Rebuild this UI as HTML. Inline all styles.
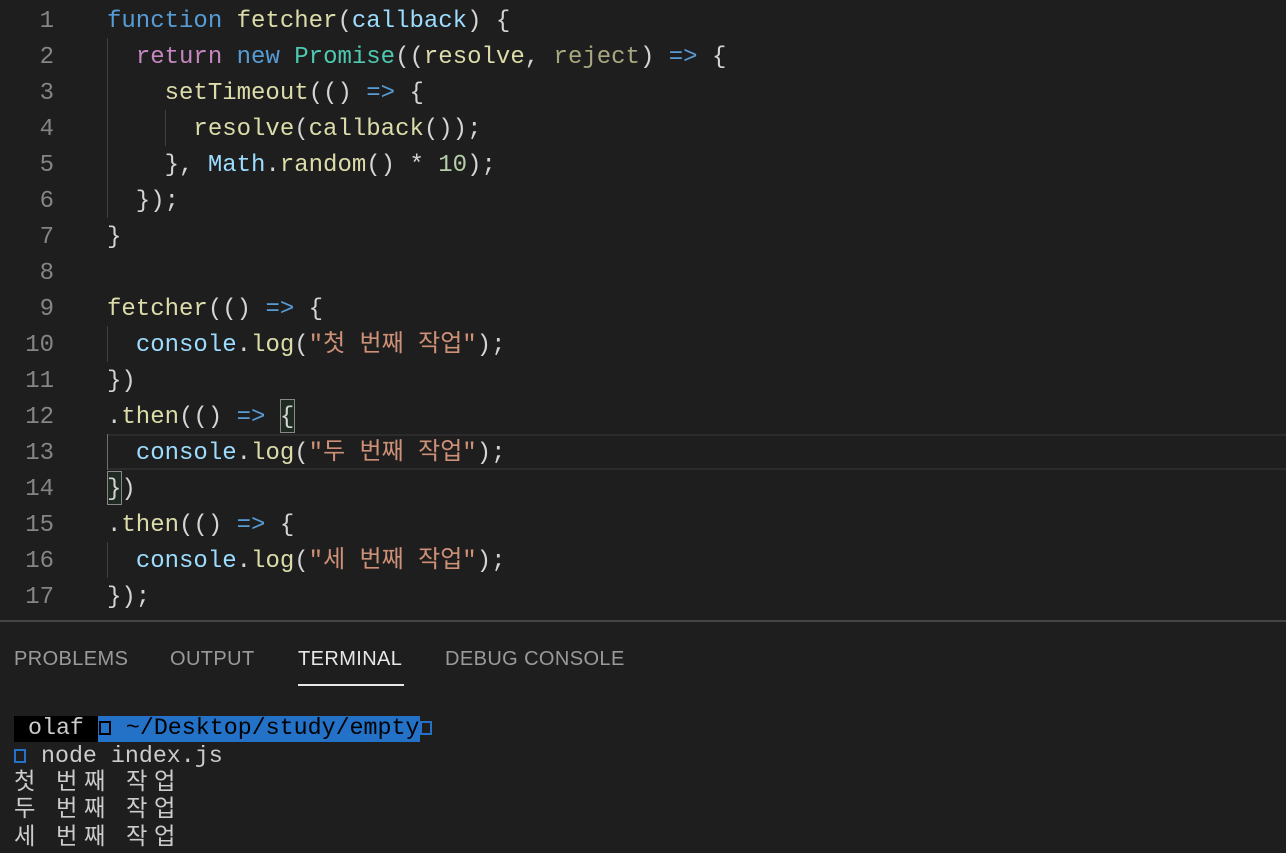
<!DOCTYPE html>
<html><head><meta charset="utf-8"><style>
*{margin:0;padding:0;box-sizing:border-box}
body{width:1286px;height:852px;background:#1e1e1e;overflow:hidden;position:relative;font-family:"Liberation Mono","Noto Sans CJK KR",monospace}
.ln{position:absolute;left:0;width:54px;text-align:right;color:#858585;font-size:24px;line-height:36px;height:36px;margin-top:2px}
.cl{position:absolute;left:107px;font-size:24px;line-height:36px;height:36px;white-space:pre;color:#d4d4d4;margin-top:2px}
.k{color:#569cd6}.p{color:#c586c0}.f{color:#dcdcaa}.v{color:#9cdcfe}.c{color:#4ec9b0}.s{color:#ce9178}.n{color:#b5cea8}.d{color:#a8a880}
.g{position:absolute;width:1px;background:#404040}
.tab{position:absolute;top:648px;font-family:"Liberation Sans",sans-serif;font-size:20px;color:#9a9a9a;letter-spacing:0.4px}
.t{position:absolute;left:14px;font-size:23.3px;line-height:27.5px;white-space:pre;color:#cccccc}
.box{display:inline-block;width:12px;height:14px;border:2px solid #2472c8;vertical-align:-1px;margin:0 1px}
.kr{display:inline-block;width:28px}
</style></head><body>
<div class="ln" style="top:2px">1</div><div class="ln" style="top:38px">2</div><div class="ln" style="top:74px">3</div><div class="ln" style="top:110px">4</div><div class="ln" style="top:146px">5</div><div class="ln" style="top:182px">6</div><div class="ln" style="top:218px">7</div><div class="ln" style="top:254px">8</div><div class="ln" style="top:290px">9</div><div class="ln" style="top:326px">10</div><div class="ln" style="top:362px">11</div><div class="ln" style="top:398px">12</div><div class="ln" style="top:434px">13</div><div class="ln" style="top:470px">14</div><div class="ln" style="top:506px">15</div><div class="ln" style="top:542px">16</div><div class="ln" style="top:578px">17</div>

<div style="position:absolute;left:107px;right:0;top:434px;height:36px;border-top:2px solid #2c2c2c;border-bottom:2px solid #2c2c2c"></div>
<div class="g" style="left:107px;top:38px;height:180px"></div>
<div class="g" style="left:165px;top:110px;height:36px"></div>
<div class="g" style="left:107px;top:326px;height:36px"></div>
<div class="g" style="left:107px;top:434px;height:36px;background:#707070"></div>
<div class="g" style="left:107px;top:542px;height:36px"></div>
<div style="position:absolute;left:280px;top:399px;width:15px;height:34px;border:1px solid #888;background:#1f2a22"></div>
<div style="position:absolute;left:107px;top:471px;width:15px;height:34px;border:1px solid #888;background:#1f2a22"></div>

<div class="cl" style="top:2px"><span class="k">function</span> <span class="f">fetcher</span>(<span class="v">callback</span>) {</div>
<div class="cl" style="top:38px">  <span class="p">return</span> <span class="k">new</span> <span class="c">Promise</span>((<span class="f">resolve</span>, <span class="d">reject</span>) <span class="k">=&gt;</span> {</div>
<div class="cl" style="top:74px">    <span class="f">setTimeout</span>(() <span class="k">=&gt;</span> {</div>
<div class="cl" style="top:110px">      <span class="f">resolve</span>(<span class="f">callback</span>());</div>
<div class="cl" style="top:146px">    }, <span class="v">Math</span>.<span class="f">random</span>() * <span class="n">10</span>);</div>
<div class="cl" style="top:182px">  });</div>
<div class="cl" style="top:218px">}</div>
<div class="cl" style="top:290px"><span class="f">fetcher</span>(() <span class="k">=&gt;</span> {</div>
<div class="cl" style="top:326px">  <span class="v">console</span>.<span class="f">log</span>(<span class="s">"첫 번째 작업"</span>);</div>
<div class="cl" style="top:362px">})</div>
<div class="cl" style="top:398px">.<span class="f">then</span>(() <span class="k">=&gt;</span> {</div>
<div class="cl" style="top:434px">  <span class="v">console</span>.<span class="f">log</span>(<span class="s">"두 번째 작업"</span>);</div>
<div class="cl" style="top:470px">})</div>
<div class="cl" style="top:506px">.<span class="f">then</span>(() <span class="k">=&gt;</span> {</div>
<div class="cl" style="top:542px">  <span class="v">console</span>.<span class="f">log</span>(<span class="s">"세 번째 작업"</span>);</div>
<div class="cl" style="top:578px">});</div>

<div style="position:absolute;left:0;right:0;top:620px;height:2px;background:#444"></div>
<div class="tab" style="left:14px">PROBLEMS</div>
<div class="tab" style="left:170px">OUTPUT</div>
<div class="tab" style="left:298px;color:#e7e7e7">TERMINAL</div>
<div class="tab" style="left:445px">DEBUG CONSOLE</div>
<div style="position:absolute;left:298px;top:684px;width:106px;height:2px;background:#e7e7e7"></div>

<div style="position:absolute;left:14px;top:716px;width:84px;height:26px;background:#000"></div>
<div style="position:absolute;left:98px;top:716px;width:322px;height:26px;background:#2472c8"></div>
<div class="t" style="top:715px"> <span>olaf</span> <span class="box" style="border-color:#000"></span><span style="color:#000"> ~/Desktop/study/empty</span><span class="box"></span></div>
<div class="t" style="top:743px"><span class="box" style="margin-left:0"></span> node index.js</div>
<div class="t" style="top:770px"><span class="kr">첫</span> <span class="kr">번</span><span class="kr">째</span> <span class="kr">작</span><span class="kr">업</span></div>
<div class="t" style="top:797px"><span class="kr">두</span> <span class="kr">번</span><span class="kr">째</span> <span class="kr">작</span><span class="kr">업</span></div>
<div class="t" style="top:825px"><span class="kr">세</span> <span class="kr">번</span><span class="kr">째</span> <span class="kr">작</span><span class="kr">업</span></div>
</body></html>
